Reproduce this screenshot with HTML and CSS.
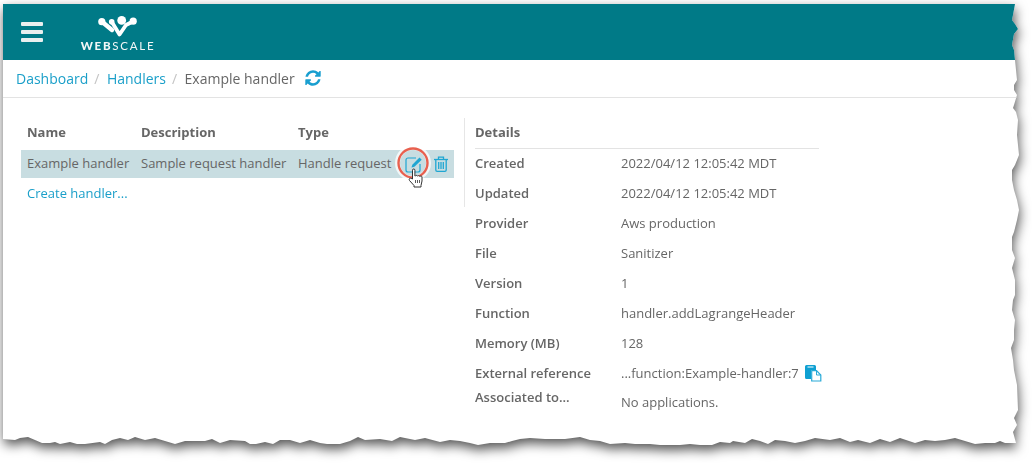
FILE: index.html
```html
<!DOCTYPE html>
<html lang="en">
<head>
<meta charset="utf-8">
<title>Handlers</title>
<link rel="stylesheet" href="styles.css">
</head>
<body>
<div class="shadow">
  <div class="sheet">
    <header class="topbar">
      <div class="burger"><span></span><span></span><span></span></div>
      <div class="logo">
        <svg class="logo-mark" width="40" height="22" viewBox="0 0 40 22">
          <g fill="none" stroke="#fff" stroke-linecap="round" stroke-linejoin="round">
            <path d="M4 5.7 L14 14" stroke-width="4.4"/>
            <path d="M13.7 5.7 L21.5 18.5 L28 9 L35 5.5" stroke-width="3.8"/>
          </g>
          <g fill="#fff">
            <circle cx="3.8" cy="5.7" r="3.6"/>
            <circle cx="13.7" cy="5.7" r="2.8"/>
            <circle cx="23.7" cy="4.4" r="4.4"/>
            <circle cx="35.2" cy="5.2" r="3.6"/>
          </g>
        </svg>
        <div class="logo-text"><b>WEB</b>SCALE</div>
      </div>
    </header>
    <nav class="crumbs">
      <a href="#">Dashboard</a><span class="sep">/</span>
      <a href="#">Handlers</a><span class="sep">/</span>
      <span class="current">Example handler</span>
      <svg class="refresh" width="18" height="18" viewBox="0 0 1792 1792"><path fill="#1a9fd0" d="M1639 1056q0 5-1 7-64 268-268 434.5t-478 166.5q-146 0-282.5-55t-243.5-157l-129 129q-19 19-45 19t-45-19-19-45v-448q0-26 19-45t45-19h448q26 0 45 19t19 45-19 45l-137 137q71 66 161 102t187 36q134 0 250-65t186-179q11-17 53-117 8-23 30-23h192q13 0 22.5 9.5t9.5 22.5zm25-800v448q0 26-19 45t-45 19h-448q-26 0-45-19t-19-45 19-45l138-138q-148-137-349-137-134 0-250 65t-186 179q-11 17-53 117-8 23-30 23h-199q-13 0-22.5-9.5t-9.5-22.5v-7q65-268 270-434.5t480-166.5q146 0 284 55.5t245 156.5l130-129q19-19 45-19t45 19 19 45z"/></svg>
    </nav>
    <main class="content">
      <section class="list">
        <div class="grid head">
          <div>Name</div><div>Description</div><div>Type</div>
        </div>
        <div class="grid row">
          <div>Example handler</div><div>Sample request handler</div><div>Handle request</div>
          <div class="actions">
            <svg width="20" height="18" viewBox="0 0 20 18" class="edit">
              <path d="M12 3 H4 a2 2 0 0 0 -2 2 V15 a2 2 0 0 0 2 2 H14 a2 2 0 0 0 2 -2 V9" fill="none" stroke="#1fa6d2" stroke-width="1.2"/>
              <path d="M7.5 12.5 L8.3 9.7 L15.5 2.5 L17.7 4.7 L10.4 11.8 Z" fill="#1fa6d2"/>
            </svg>
            <svg width="14" height="16" viewBox="0 0 14 16" class="trash">
              <g fill="none" stroke="#1fa6d2" stroke-width="1.3">
                <path d="M0 3.5 H14"/>
                <path d="M4.5 3.5 V1.2 H9.5 V3.5"/>
                <path d="M1.8 3.5 V14 a1.3 1.3 0 0 0 1.3 1.3 H10.9 a1.3 1.3 0 0 0 1.3 -1.3 V3.5"/>
                <path d="M4.7 6 V13 M7 6 V13 M9.3 6 V13"/>
              </g>
            </svg>
          </div>
          <svg class="highlight" width="36" height="36" viewBox="0 0 36 36">
            <circle cx="18" cy="18" r="15.5" fill="none" stroke="#fff" stroke-opacity=".75" stroke-width="5"/>
            <circle cx="18" cy="18" r="14.5" fill="none" stroke="#e8604f" stroke-width="2.4"/>
          </svg>
          <svg class="hand" width="16" height="20" viewBox="0 0 16 20">
            <path d="M4.5 11 L4.5 2.2 a1.2 1.2 0 0 1 2.4 0 V8 h0.6 a1.1 1.1 0 0 1 2 .1 h.3 a1.1 1.1 0 0 1 2 .4 h.2 a1.1 1.1 0 0 1 2 .5 V13 L13 17.5 V19 H6 V17.5 L1.5 12.5 C.5 11 2 9.6 3.2 10.4 Z" fill="#fff" stroke="#333" stroke-width="1" stroke-linejoin="round"/>
            <path d="M7.5 12 V15 M9.5 12 V15 M11.5 12 V15" stroke="#333" stroke-width=".8"/>
          </svg>
        </div>
        <div class="create"><a href="#">Create handler...</a></div>
      </section>
      <section class="details">
        <div class="details-head">Details</div>
        <dl class="facts">
          <div class="fact"><dt>Created</dt><dd>2022/04/12 12:05:42 MDT</dd></div>
          <div class="fact"><dt>Updated</dt><dd>2022/04/12 12:05:42 MDT</dd></div>
          <div class="fact"><dt>Provider</dt><dd>Aws production</dd></div>
          <div class="fact"><dt>File</dt><dd>Sanitizer</dd></div>
          <div class="fact"><dt>Version</dt><dd>1</dd></div>
          <div class="fact"><dt>Function</dt><dd>handler.addLagrangeHeader</dd></div>
          <div class="fact"><dt>Memory (MB)</dt><dd>128</dd></div>
          <div class="fact"><dt>External reference</dt><dd>...function:Example-handler:7
            <svg class="copy" width="18" height="18" viewBox="0 0 18 18">
              <path d="M1 2.5 a1.5 1.5 0 0 1 1.5 -1.5 H10.5 a1.5 1.5 0 0 1 1.5 1.5 V6 H7 V15 H2.5 A1.5 1.5 0 0 1 1 13.5 Z" fill="#0fa0d2"/>
              <path d="M3.5 3 H9.5" stroke="#fff" stroke-width="1"/>
              <path d="M7.7 6.7 H12.5 L16.8 11 V17 H7.7 Z" fill="#fff" stroke="#28aad8" stroke-width="1.2"/>
              <path d="M12.5 6.7 V11 H16.8" fill="none" stroke="#28aad8" stroke-width="1"/>
            </svg></dd></div>
          <div class="fact fact-last"><dt>Associated to...</dt><dd>No applications.</dd></div>
        </dl>
      </section>
    </main>
  </div>
</div>
</body>
</html>
```
FILE: styles.css
```css
* { box-sizing: border-box; }
html, body { margin: 0; height: 100%; background: #fff; overflow: hidden; }
body { font-family: "Open Sans", "Liberation Sans", sans-serif; font-size: 13px; color: #666; }
a { color: #1a9fc9; text-decoration: none; }

.shadow {
  width: 1032px;
  height: 463px;
  filter: drop-shadow(1px 5px 6px rgba(0,0,0,.68));
}
.sheet {
  width: 1032px;
  height: 463px;
  background: #fff;
  clip-path: polygon(
    3px 4px, 1015px 4px, 1013px 15px, 1012px 20px, 1015px 24px, 1018px 29px, 1014px 34px, 1012px 45px, 1014px 50px,
    1015px 60px, 1016px 70px, 1017px 80px, 1014px 85px, 1014px 90px, 1017px 95px, 1014px 105px, 1013px 108px, 1016px 112px, 1018px 120px,
    1017px 135px, 1018px 145px, 1019px 155px, 1015px 165px, 1012px 170px, 1012px 180px, 1014px 190px, 1017px 200px, 1019px 210px, 1017px 220px,
    1014px 232px, 1012px 237px, 1012px 250px, 1015px 258px, 1012px 268px, 1015px 280px, 1015px 295px, 1013px 300px, 1012px 310px, 1015px 320px,
    1014px 330px, 1014px 340px, 1011px 348px, 1013px 360px, 1014px 370px, 1017px 385px, 1018px 410px, 1014px 418px, 1017px 425px, 1013px 432px, 1016px 443px,
    1005px 443px, 1000px 441px, 995px 443px, 985px 443px, 975px 444px, 965px 441px, 955px 438px, 945px 440px, 935px 441px, 925px 440px, 915px 443px,
    900px 438px, 890px 442px, 880px 439px, 870px 443px, 858px 440px, 850px 442px, 840px 438px, 830px 440px, 815px 438px, 805px 441px, 795px 443px,
    785px 441px, 775px 440px, 768px 444px, 760px 441px, 752px 439px, 745px 443px, 733px 441px, 730px 443px, 720px 442px, 712px 445px, 700px 445px,
    690px 444px, 680px 445px, 670px 445px, 660px 445px, 650px 444px, 635px 444px, 625px 443px, 610px 444px, 600px 441px, 590px 440px, 580px 437px,
    565px 439px, 545px 439px, 530px 438px, 520px 439px, 512px 441px, 505px 443px, 490px 443px, 478px 445px, 470px 443px, 460px 441px, 450px 440px,
    440px 442px, 425px 438px, 415px 440px, 400px 437px, 392px 441px, 380px 439px, 365px 440px, 358px 437px, 350px 441px, 340px 444px,
    327px 444px, 320px 443px, 310px 440px, 300px 443px, 290px 440px, 280px 440px, 273px 444px, 265px 442px, 256px 444px, 250px 444px, 245px 441px,
    230px 440px, 220px 443px, 212px 439px, 205px 441px, 195px 441px, 185px 441px, 175px 444px, 165px 441px, 155px 438px, 145px 440px, 135px 437px,
    128px 440px, 120px 438px, 112px 440px, 105px 444px, 100px 442px, 85px 444px, 77px 444px, 70px 442px, 60px 444px, 55px 442px, 50px 443px,
    42px 443px, 35px 440px, 28px 437px, 20px 438px, 15px 440px, 3px 439px
  );
}

.topbar {
  height: 60px;
  background: #007a87;
  display: flex;
  align-items: flex-start;
  padding: 16px 0 0 21px;
}
.burger {
  width: 22px;
  margin-top: 6px;
  display: flex;
  flex-direction: column;
  gap: 4px;
}
.burger span { height: 4px; background: #e9efef; border-radius: 1px; }
.logo {
  margin-left: 37px;
  width: 76px;
  display: flex;
  flex-direction: column;
  align-items: center;
}
.logo-mark { display: block; margin-left: -1px; }
.logo-text {
  margin-top: 1px;
  font-family: Lato, "Open Sans", sans-serif;
  font-size: 11.5px;
  line-height: 13px;
  letter-spacing: 1.75px;
  color: #f2f7f7;
  white-space: nowrap;
}
.logo-text b { font-weight: 900; }

.crumbs {
  height: 38px;
  border-bottom: 1px solid #e3e3e3;
  display: flex;
  align-items: center;
  padding: 0 0 1px 16px;
  font-size: 14px;
}
.sep { color: #c4c4c4; margin: 0 7.5px 0 6px; }
.current { color: #666; }
.refresh { margin-left: 9px; }

.content { display: flex; align-items: flex-start; padding: 20px 0 0 21px; }
.list { width: 444px; height: 89px; border-right: 1px solid #e6e6e6; }
.grid {
  position: relative;
  width: 433px;
  display: grid;
  grid-template-columns: 114px 157px 100px 1fr;
  align-items: center;
  padding-left: 6px;
  white-space: nowrap;
}
.head { height: 32px; font-weight: 700; color: #666; padding-bottom: 4px; }
.row { height: 28px; background: #c8dde1; color: #666; padding-bottom: 2px; }
.actions { display: flex; align-items: center; gap: 10px; margin-left: 6px; padding-top: 2px; }
.edit, .trash { display: block; flex: none; }
.highlight { position: absolute; left: 374px; top: -5px; }
.hand { position: absolute; left: 387px; top: 18px; }
.create { height: 29px; padding: 6px 0 0 6px; }

.details { width: 354px; padding-left: 10px; }
.details-head {
  height: 31px;
  margin-bottom: -1px;
  font-weight: 700;
  border-bottom: 1px solid #e3e3e3;
  line-height: 28px;
}
.facts { margin: 0; }
.fact { display: flex; align-items: center; height: 30px; }
.fact dt { flex: none; width: 146px; font-weight: 600; }
.fact dd { flex: none; margin: 0; white-space: nowrap; display: flex; align-items: center; }
.copy { margin-left: 5px; }
.fact-last { align-items: flex-start; height: auto; }
.fact-last dt { line-height: 18px; }
.fact-last dd { padding-top: 5px; line-height: 18px; }
```
